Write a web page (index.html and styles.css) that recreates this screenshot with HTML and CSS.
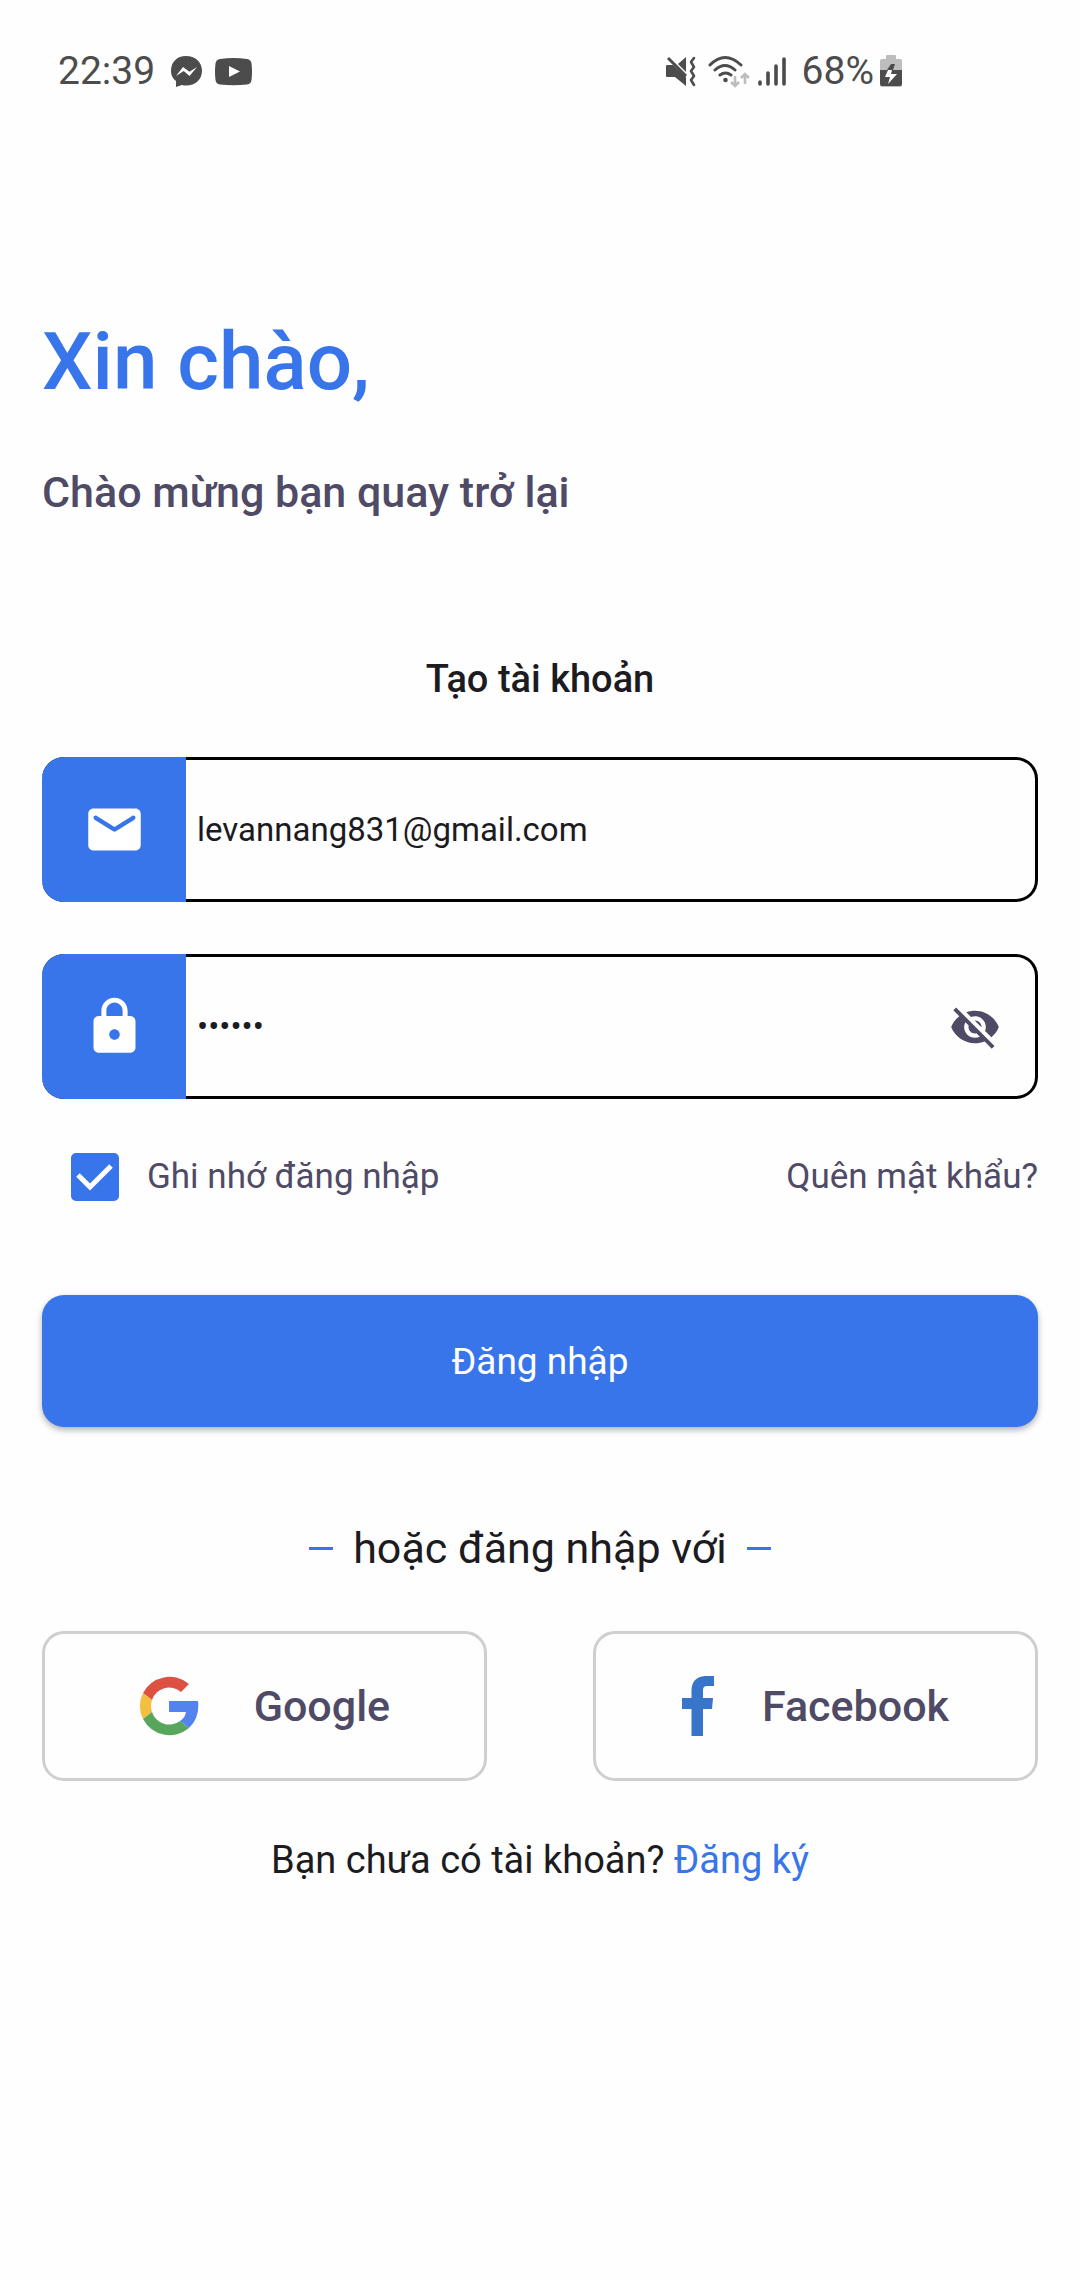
FILE: index.html
```html
<!DOCTYPE html>
<html lang="vi">
<head>
<meta charset="utf-8">
<meta name="viewport" content="width=device-width, initial-scale=1">
<title>Đăng nhập</title>
<link rel="stylesheet" href="styles.css">
</head>
<body>
<header class="status">
  <div class="status-left">
    <span class="clock">22:39</span>
    <svg class="messenger" width="33" height="33" viewBox="0 0 33 33" aria-hidden="true"><path fill="#4c4c4c" d="M16 1C7 1 1 7 1 16c0 4 1.500 7.500 5 10v6l6-2c1.500.4 3 .6 4 .6 9.500 0 16-6 16-15C32 7 25 1 16 1z"/><path fill="#fefefe" d="M6 21l7-9 6.500 4.800L27 12l-7.500 9-5.800-5z"/></svg>
    <svg width="37" height="33" viewBox="0 0 37 33" aria-hidden="true"><path fill="#4c4c4c" d="M5 4Q18.500 2 32 4q4 .5 4.500 4.500 1 8 0 16.500-.5 4-4.500 4.500-13.500 1.500-27 0-4-.5-4.500-4.500-1-8.500 0-16.500Q1 4.500 5 4z"/><path fill="#fefefe" d="M14 11l11 5.500L14 22z"/></svg>
  </div>
  <div class="status-right">
    <svg width="30" height="32" viewBox="0 0 30 32" aria-hidden="true"><g fill="#4c4c4c"><path d="M1 10h6l13 12v9L9 22H1q-1 0-1-1V11q0-1 1-1z"/><path d="M20 2v15l-8-8z"/></g><path fill="none" stroke="#4c4c4c" stroke-width="3" d="M2 3l18 18"/><path fill="none" stroke="#4c4c4c" stroke-width="2.600" stroke-linecap="round" stroke-linejoin="round" d="M28 3l-3 4 3 5-3 4 3 5-3 4 3 5"/></svg>
    <svg class="wifi" width="42" height="34" viewBox="0 0 42 34" aria-hidden="true"><g fill="none" stroke="#4c4c4c" stroke-width="3" stroke-linecap="round"><path d="M2 11Q17-4 33 11M7 16q10-9 20 0M12 21q5.500-4 11 0"/></g><circle cx="17.500" cy="26" r="2.300" fill="#4c4c4c"/><path fill="none" stroke="#bdbdbd" stroke-width="2.600" d="M27 22v10m-4-4l4 4 4-4M37 30V20m-4 4l4-4 4 4"/></svg>
    <svg class="signal" width="28" height="32" viewBox="0 0 28 32" aria-hidden="true"><path fill="none" stroke="#4c4c4c" stroke-width="3.600" stroke-linecap="round" d="M2 27v2M10 18v11M18 11v18M26 4v25"/></svg>
    <span class="charge">68%</span>
    <svg class="battery" width="22" height="34" viewBox="0 0 22 34" aria-hidden="true"><path fill="#bdbdbd" d="M6 2q0-1 1-1h8q1 0 1 1v3h4q2 0 2 2v24q0 2-2 2H2q-2 0-2-2V7q0-2 2-2h4z"/><path fill="#4c4c4c" d="M0 16h7l4-6h4l-2 6h9v14q0 2-2 2H2q-2 0-2-2z"/><path fill="#fefefe" d="M8 16h4l-1 4h6l-9 10 2-7H5z"/></svg>
  </div>
</header>

<main class="page">
  <h1 class="title">Xin chào,</h1>
  <p class="subtitle">Chào mừng bạn quay trở lại</p>

  <form class="login">
    <h2 class="form-title">Tạo tài khoản</h2>

    <div class="field">
      <label class="field-icon" for="email" aria-label="Email">
        <svg width="63" height="63" viewBox="0 0 24 24" aria-hidden="true"><path fill="#fff" d="M20 4H4c-1.100 0-2 .9-2 2v12c0 1.100.9 2 2 2h16c1.100 0 2-.9 2-2V6c0-1.100-.9-2-2-2zm-.4 4.250l-7.070 4.420c-.32.2-.74.2-1.060 0L4.400 8.250c-.25-.16-.4-.43-.4-.72 0-.67.73-1.070 1.300-.72L12 11l6.700-4.190c.57-.35 1.300.05 1.300.72 0 .29-.15.56-.4.72z"/></svg>
      </label>
      <input class="field-input" id="email" type="email" value="levannang831@gmail.com">
    </div>

    <div class="field">
      <label class="field-icon" for="password" aria-label="Mật khẩu">
        <svg width="63" height="63" viewBox="0 0 24 24" aria-hidden="true"><path fill="#fff" d="M18 8h-1V6c0-2.760-2.240-5-5-5S7 3.240 7 6v2H6c-1.100 0-2 .9-2 2v10c0 1.100.9 2 2 2h12c1.100 0 2-.9 2-2V10c0-1.100-.9-2-2-2zm-6 9c-1.100 0-2-.9-2-2s.9-2 2-2 2 .9 2 2-.9 2-2 2zm3.100-9H8.900V6c0-1.710 1.390-3.100 3.100-3.100s3.100 1.390 3.100 3.100v2z"/></svg>
      </label>
      <input class="field-input" id="password" type="password" value="123456">
      <button class="reveal" type="button" aria-label="Hiện mật khẩu">
        <svg width="52" height="52" viewBox="0 0 24 24" aria-hidden="true"><path fill="#4f4a66" d="M12 7c2.760 0 5 2.240 5 5 0 .65-.13 1.260-.36 1.830l2.920 2.920c1.510-1.260 2.700-2.890 3.430-4.750-1.730-4.390-6-7.500-11-7.500-1.400 0-2.740.25-3.980.7l2.160 2.160C10.740 7.130 11.350 7 12 7zM2 4.270l2.280 2.280.46.46C3.080 8.300 1.780 10.020 1 12c1.730 4.390 6 7.500 11 7.500 1.550 0 3.030-.3 4.380-.84l.42.42L19.730 22 21 20.730 3.270 3 2 4.270zM7.530 9.800l1.550 1.550c-.05.21-.08.43-.08.65 0 1.660 1.340 3 3 3 .22 0 .44-.03.65-.08l1.550 1.550c-.67.33-1.410.53-2.200.53-2.760 0-5-2.240-5-5 0-.79.2-1.530.53-2.200zm4.310-.78l3.150 3.150.02-.16c0-1.660-1.340-3-3-3l-.17.01z"/></svg>
      </button>
    </div>

    <div class="options">
      <label class="remember">
        <span class="tick">
          <input class="tick-box" type="checkbox" checked>
          <svg class="tick-mark" viewBox="0 0 48 48" aria-hidden="true"><path fill="none" stroke="#fff" stroke-width="5" d="M7 22l12 12 21-21"/></svg>
        </span>
        Ghi nhớ đăng nhập
      </label>
      <a class="forgot" href="#">Quên mật khẩu?</a>
    </div>

    <button class="submit" type="submit">Đăng nhập</button>
  </form>

  <p class="divider">hoặc đăng nhập với</p>

  <div class="socials">
    <button class="social" type="button">
      <svg width="60" height="60" viewBox="0 0 60 60" aria-hidden="true"><path fill="#dc5142" d="M4 17A30 30 0 0 1 50 8l-8 8A18 18 0 0 0 13 24z"/><path fill="#f2bf42" d="M4 17a30 30 0 0 0 0 26l9-7a19 19 0 0 1 0-12z"/><path fill="#58a65c" d="M4 43a30 30 0 0 0 46 9l-9-7a18 18 0 0 1-28-9z"/><path fill="#5283ee" d="M30 25h29q2 17-9 27l-9-7q5-3 6-9H30z"/></svg>
      <span>Google</span>
    </button>
    <button class="social" type="button">
      <svg width="33" height="60" viewBox="0 0 33 60" aria-hidden="true"><path fill="#3874ca" d="M9.500 60V33H0V22h9.500v-8Q10 1 23 0h9v10h-7q-4 0-4 4v8h10l-1 11h-9v27z"/></svg>
      <span>Facebook</span>
    </button>
  </div>

  <p class="signup">Bạn chưa có tài khoản? <a class="signup-link" href="#">Đăng ký</a></p>
</main>
</body>
</html>
```

FILE: styles.css
```css
* {
  box-sizing: border-box;
}

body {
  margin: 0;
  background: #fefefe;
  color: #1c1b1f;
  font-family: Roboto, "Noto Sans", sans-serif;
}

h1, h2, p {
  margin: 0;
}

svg {
  display: block;
  flex: none;
}

button, input {
  font: inherit;
}

a {
  color: inherit;
  text-decoration: none;
}

/* Status bar */
.status {
  display: flex;
  justify-content: space-between;
  align-items: center;
  height: 142px;
  padding: 0 178px 0 58px;
  color: #4c4c4c;
  font-size: 39px;
  line-height: 46px;
}

.status-left,
.status-right {
  display: flex;
  align-items: center;
  gap: 12px;
}

.clock {
  margin-right: 3px;
}

.signal {
  margin-left: -4px;
}

.charge {
  margin: 0 -6px 0 4px;
}

/* Page */
.page {
  padding: 174px 42px 60px;
}

.title {
  color: #3875ea;
  font-size: 80px;
  font-weight: 500;
  line-height: 92px;
}

.subtitle {
  margin-top: 59px;
  color: #4f4a66;
  font-size: 43px;
  font-weight: 500;
  line-height: 50px;
}

.login {
  margin-top: 140px;
}

.form-title {
  margin-bottom: 56px;
  font-size: 38px;
  font-weight: 500;
  line-height: 44px;
  text-align: center;
}

/* Text fields */
.field {
  display: flex;
  height: 145px;
  border: 3px solid #000;
  border-left: 0;
  border-radius: 22px;
}

.field + .field {
  margin-top: 52px;
}

.field-icon {
  display: flex;
  flex: none;
  align-items: center;
  justify-content: center;
  width: 144px;
  margin: -3px 0;
  border-radius: 22px 0 0 22px;
  background: #3875ea;
}

.field-input {
  flex: 1;
  min-width: 0;
  padding: 0 11px;
  border: 0;
  outline: 0;
  background: none;
  color: #1c1b1f;
  font-size: 33px;
}

.reveal {
  display: flex;
  align-items: center;
  padding: 0 34px;
  border: 0;
  background: none;
}

/* Remember me / forgot password */
.options {
  display: flex;
  align-items: center;
  justify-content: space-between;
  margin-top: 54px;
  padding-left: 29px;
  color: #4f4a66;
  font-size: 35px;
  line-height: 40px;
}

.remember {
  display: flex;
  align-items: center;
  gap: 28px;
}

.tick {
  display: grid;
  width: 48px;
  height: 48px;
}

.tick-box,
.tick-mark {
  grid-area: 1 / 1;
  width: 48px;
  height: 48px;
}

.tick-box {
  margin: 0;
  border: 3px solid #3875ea;
  border-radius: 5px;
  appearance: none;
}

.tick-box:checked {
  background: #3875ea;
}

.tick-mark {
  z-index: 1;
  visibility: hidden;
  pointer-events: none;
}

.tick-box:checked + .tick-mark {
  visibility: visible;
}

.submit {
  display: block;
  width: 100%;
  height: 132px;
  margin-top: 94px;
  border: 0;
  border-radius: 22px;
  background: #3875ea;
  box-shadow: 0 3px 6px rgba(0, 0, 0, 0.3);
  color: #fff;
  font-size: 37px;
}

/* Social sign-in */
.divider {
  display: flex;
  align-items: center;
  justify-content: center;
  gap: 20px;
  margin-top: 96px;
  font-size: 43px;
  line-height: 50px;
}

.divider::before,
.divider::after {
  width: 24px;
  height: 3px;
  background: #3875ea;
  content: "";
}

.socials {
  display: grid;
  grid-template-columns: 1fr 1fr;
  gap: 106px;
  margin-top: 58px;
}

.social {
  display: flex;
  align-items: center;
  justify-content: space-evenly;
  height: 150px;
  padding: 0 39px;
  border: 3px solid #cfcfcf;
  border-radius: 22px;
  background: none;
  color: #4f4a66;
  font-size: 43px;
  font-weight: 500;
}

.signup {
  margin-top: 57px;
  font-size: 38px;
  line-height: 44px;
  text-align: center;
}

.signup-link {
  color: #3875ea;
}
```
